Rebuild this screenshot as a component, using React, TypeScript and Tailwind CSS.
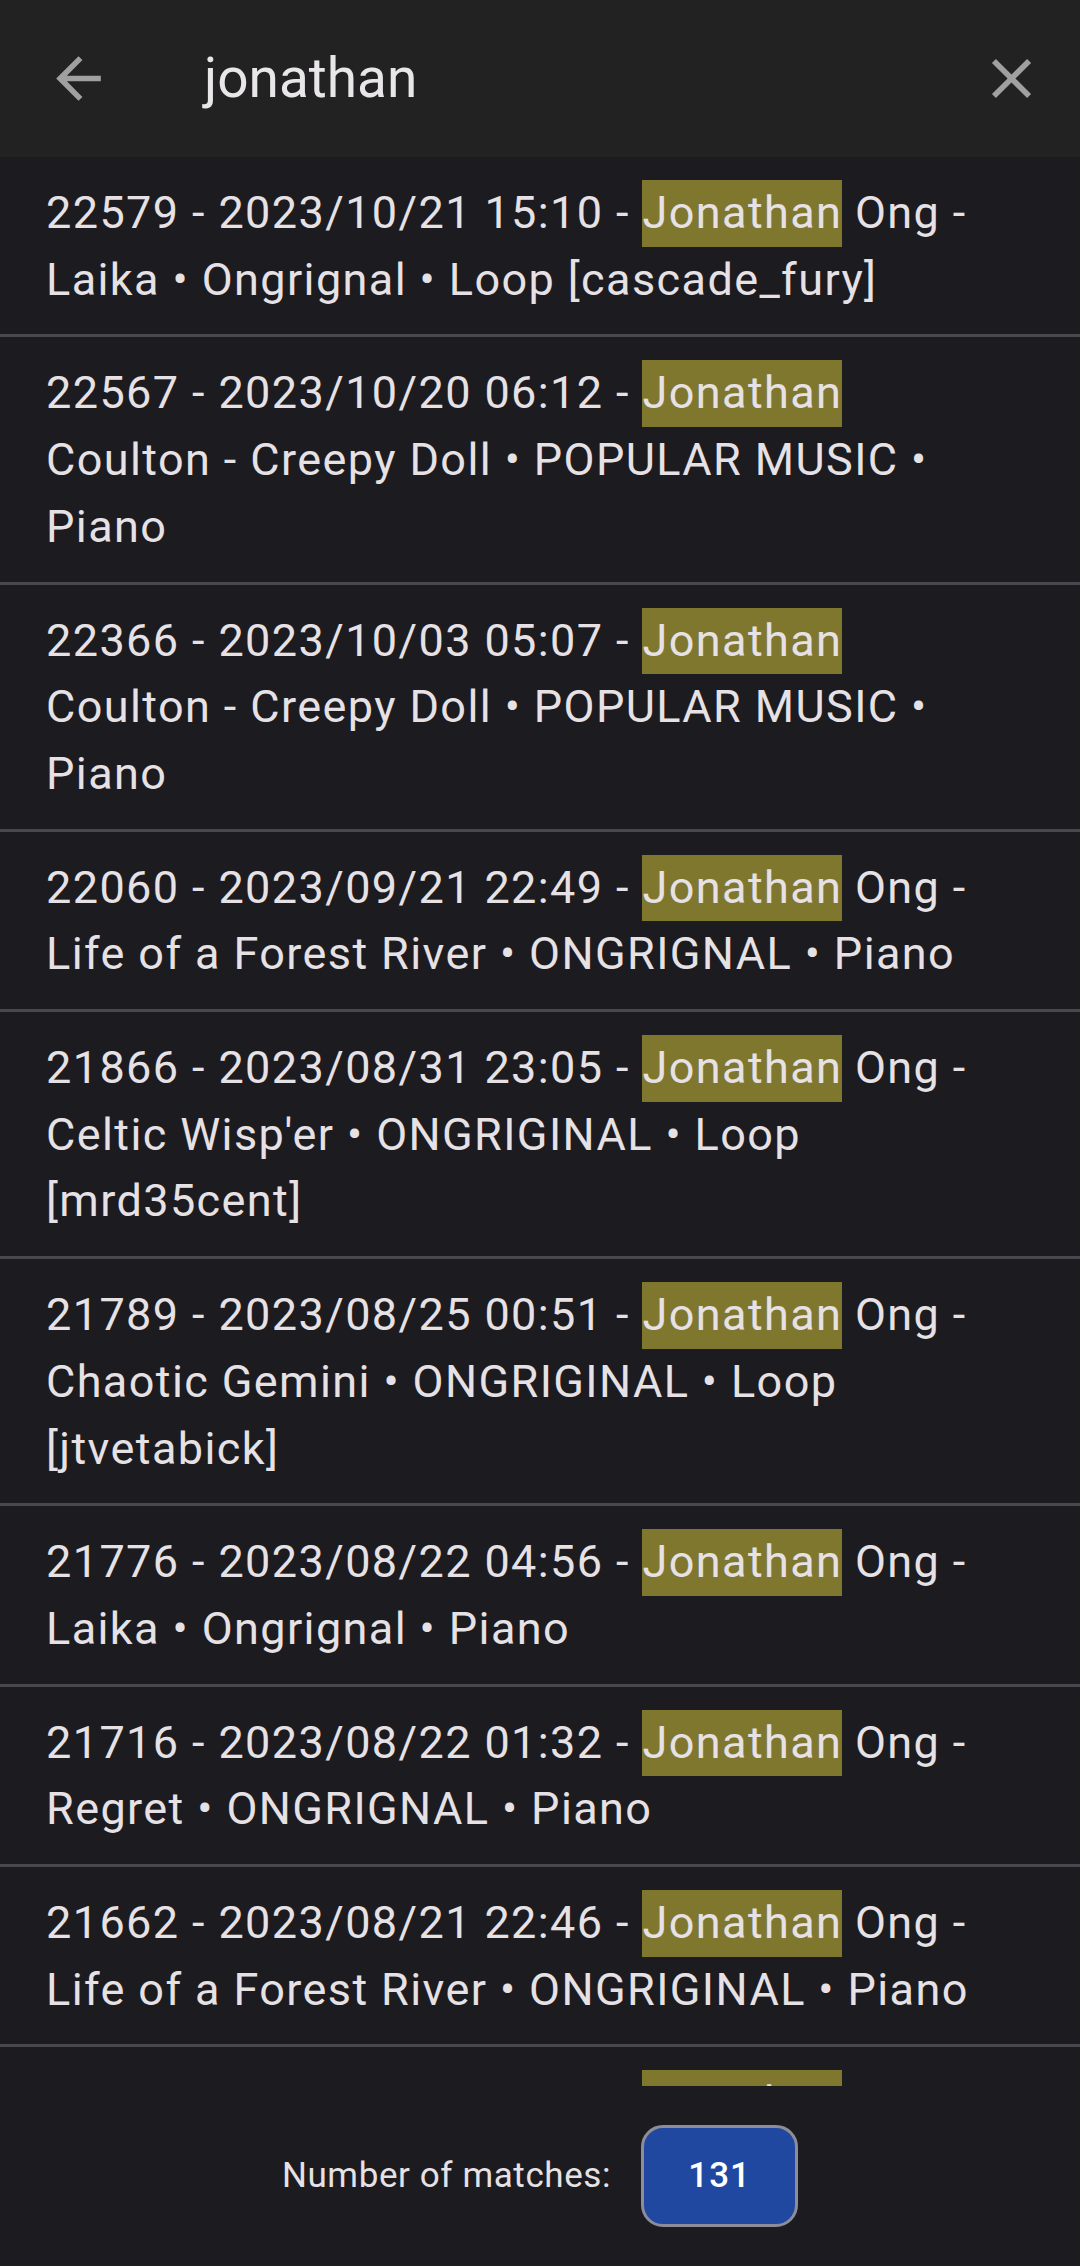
import React from "react";

type Row = { pre: string; post: string };

const rows: Row[] = [
  { pre: "22579 - 2023/10/21 15:10 - ", post: " Ong - Laika • Ongrignal • Loop [cascade_fury]" },
  { pre: "22567 - 2023/10/20 06:12 - ", post: " Coulton - Creepy Doll • POPULAR MUSIC • Piano" },
  { pre: "22366 - 2023/10/03 05:07 - ", post: " Coulton - Creepy Doll • POPULAR MUSIC • Piano" },
  { pre: "22060 - 2023/09/21 22:49 - ", post: " Ong - Life of a Forest River • ONGRIGNAL • Piano" },
  { pre: "21866 - 2023/08/31 23:05 - ", post: " Ong - Celtic Wisp'er • ONGRIGINAL • Loop [mrd35cent]" },
  { pre: "21789 - 2023/08/25 00:51 - ", post: " Ong - Chaotic Gemini • ONGRIGINAL • Loop [jtvetabick]" },
  { pre: "21776 - 2023/08/22 04:56 - ", post: " Ong - Laika • Ongrignal • Piano" },
  { pre: "21716 - 2023/08/22 01:32 - ", post: " Ong - Regret • ONGRIGNAL • Piano" },
  { pre: "21662 - 2023/08/21 22:46 - ", post: " Ong - Life of a Forest River • ONGRIGINAL • Piano" },
  { pre: "21613 - 2023/08/19 03:15 - ", post: " Ong - Laika • Ongrignal • Piano" },
];

export default function App() {
  return (
    <div
      className="flex h-[2266px] w-[1080px] flex-col overflow-hidden bg-[#1c1b1f] text-[#e6e1e5]"
      style={{ fontFamily: "Roboto, 'Noto Sans', sans-serif" }}
    >
      <header className="flex h-[157px] shrink-0 items-center bg-[#222222]">
        <div className="ml-[45px] flex h-[67px] w-[67px] items-center justify-center">
          <svg viewBox="0 0 24 24" className="h-[67px] w-[67px]" fill="#a0a0a0">
            <path d="M20 11H7.83l5.59-5.59L12 4l-8 8 8 8 1.41-1.41L7.83 13H20v-2z" />
          </svg>
        </div>
        <div className="ml-[92px] flex-1 text-[55px] leading-none text-[#e8e6e8]">jonathan</div>
        <div className="mr-[35px] flex h-[67px] w-[67px] items-center justify-center">
          <svg viewBox="0 0 24 24" className="h-[67px] w-[67px]" fill="#a0a0a0">
            <path d="M19 6.41L17.59 5 12 10.59 6.41 5 5 6.41 10.59 12 5 17.59 6.41 19 12 13.41 17.59 19 19 17.59 13.41 12z" />
          </svg>
        </div>
      </header>

      <div className="min-h-0 flex-1 overflow-hidden">
        {rows.map((r, i) => (
          <div
            key={i}
            className="border-b-[3px] border-[#49484f] pb-[21px] pl-[46px] pr-[88px] pt-[23px] text-[45px] leading-[66.7px] tracking-[1.4px]"
          >
            {r.pre}
            <span className="inline-block bg-[#80772f]">Jonathan</span>
            {r.post}
          </div>
        ))}
      </div>

      <footer className="flex h-[180px] shrink-0 items-center justify-center gap-[30px]">
        <span className="text-[35px] tracking-[0.6px] text-[#e6e1e5]">Number of matches:</span>
        <div className="flex h-[102px] w-[157px] items-center justify-center rounded-[22px] border-[3px] border-[#8d8c99] bg-[#2148a0] text-[35px] font-medium tracking-[1px] text-white">
          131
        </div>
      </footer>
    </div>
  );
}
